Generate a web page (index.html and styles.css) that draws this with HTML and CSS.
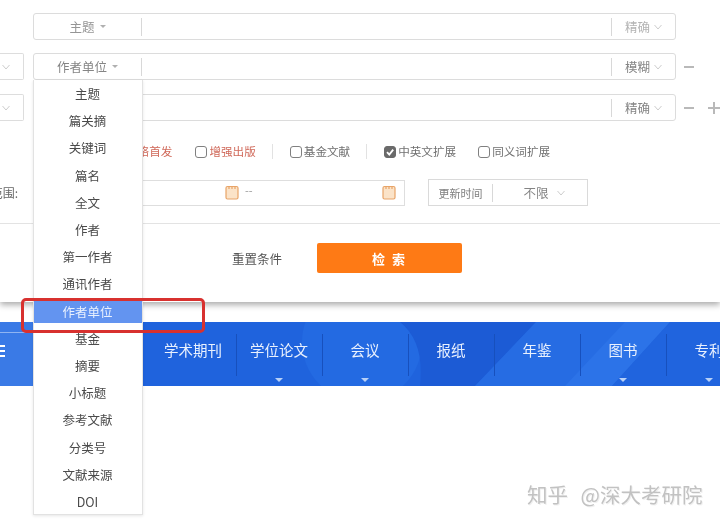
FILE: index.html
```html
<!DOCTYPE html>
<html lang="zh">
<head>
<meta charset="utf-8">
<title>高级检索</title>
<link rel="stylesheet" href="styles.css">
</head>
<body>
<div class="page">
  <section class="panel">
    <div class="rows">
      <div class="row">
        <div class="stub stub-none"></div>
        <div class="field">
          <div class="select select-light">主题<i class="caret"></i></div>
          <div class="input"></div>
          <div class="match match-faint">精确<svg class="chev" viewBox="0 0 8 6"><path d="M.5 1 4 5l3.500-4"/></svg></div>
        </div>
      </div>
      <div class="row">
        <div class="stub"><svg class="chev" viewBox="0 0 8 6"><path d="M.5 1 4 5l3.500-4"/></svg></div>
        <div class="field">
          <div class="select">作者单位<i class="caret"></i></div>
          <div class="input"></div>
          <div class="match">模糊<svg class="chev" viewBox="0 0 8 6"><path d="M.5 1 4 5l3.500-4"/></svg></div>
        </div>
        <div class="ops"><span class="minus"></span></div>
      </div>
      <div class="row">
        <div class="stub"><svg class="chev" viewBox="0 0 8 6"><path d="M.5 1 4 5l3.500-4"/></svg></div>
        <div class="field">
          <div class="select"></div>
          <div class="input"></div>
          <div class="match">精确<svg class="chev" viewBox="0 0 8 6"><path d="M.5 1 4 5l3.500-4"/></svg></div>
        </div>
        <div class="ops"><span class="minus"></span><span class="plus"></span></div>
      </div>
    </div>

    <div class="checks">
      <span class="check red">网络首发</span>
      <label class="check red c-enhance"><i class="box"></i>增强出版</label>
      <i class="vline"></i>
      <label class="check"><i class="box"></i>基金文献</label>
      <i class="vline"></i>
      <label class="check"><i class="box on"><svg viewBox="0 0 10 10"><path d="M2 5.200 4.300 7.600 8.200 2.600"/></svg></i>中英文扩展</label>
      <label class="check c-syn"><i class="box"></i>同义词扩展</label>
    </div>

    <div class="dates">
      <div class="date-label"><span>时间范围:</span></div>
      <div class="date-box">
        <div class="date-part">
          <svg class="cal" viewBox="0 0 14 15"><rect x="1" y="1.500" width="12" height="12.500" rx="1.500"/><path d="M4 1v3M7 1v3M10 1v3"/></svg>
        </div>
        <span class="dash">--</span>
        <div class="date-part date-end">
          <svg class="cal" viewBox="0 0 14 15"><rect x="1" y="1.500" width="12" height="12.500" rx="1.500"/><path d="M4 1v3M7 1v3M10 1v3"/></svg>
        </div>
      </div>
      <div class="update">
        <span class="update-label">更新时间</span>
        <span class="update-value">不限<svg class="chev" viewBox="0 0 8 6"><path d="M.5 1 4 5l3.500-4"/></svg></span>
      </div>
    </div>

    <div class="actions">
      <a class="reset">重置条件</a>
      <button class="search" type="button">检 索</button>
    </div>
  </section>

  <nav class="nav">
    <svg class="nav-bg" viewBox="0 0 720 64" preserveAspectRatio="none">
      <rect width="720" height="64" fill="#1f63dd"/>
      <rect width="140" height="64" fill="#3a7ae6"/>
      <circle cx="362" cy="20" r="60" fill="#236ae2"/>
      <path d="M400 0H536L475 64H420Q425 20 400 0Z" fill="#1c5bd5"/>
      <path d="M475 64 536 0H670L612 64Z" fill="#266ce3"/>
      <path d="M565 64 625 0H670L612 64Z" fill="#2c73e8"/>
      <path d="M612 64 670 0H720V64Z" fill="#2064de"/>
    </svg>
    <div class="nav-left"><span class="nav-icon"></span></div>
    <div class="nav-item">学术期刊</div>
    <div class="nav-item more">学位论文</div>
    <div class="nav-item more">会议</div>
    <div class="nav-item">报纸</div>
    <div class="nav-item">年鉴</div>
    <div class="nav-item more">图书</div>
    <div class="nav-item more">专利</div>
  </nav>

  <ul class="menu">
    <li>主题</li>
    <li>篇关摘</li>
    <li>关键词</li>
    <li>篇名</li>
    <li>全文</li>
    <li>作者</li>
    <li>第一作者</li>
    <li>通讯作者</li>
    <li class="active"><span>作者单位</span></li>
    <li>基金</li>
    <li>摘要</li>
    <li>小标题</li>
    <li>参考文献</li>
    <li>分类号</li>
    <li>文献来源</li>
    <li>DOI</li>
  </ul>

  <div class="callout"></div>
  <div class="watermark">知乎 @深大考研院</div>
</div>
</body>
</html>
```
FILE: styles.css
```css
* { box-sizing: border-box; }
html, body { margin: 0; padding: 0; background: #fff; }
body {
  font-family: "Noto Sans CJK SC", "Liberation Sans", sans-serif;
  font-size: 12.5px;
  color: #555;
  overflow: hidden;
}
.page {
  position: relative;
  width: 720px;
  height: 524px;
  overflow: hidden;
  filter: blur(.4px);
}

.panel {
  height: 302px;
  background: #fff;
  box-shadow: 0 3px 6px rgba(0, 0, 0, .32);
  padding-top: 13px;
}
.rows { display: flex; flex-direction: column; gap: 13px; }
.row { display: flex; height: 27px; }
.row:last-child { margin-top: 1px; }
.stub {
  width: 24px;
  margin-right: 9px;
  border: 1px solid #ddd;
  border-left: 0;
  border-radius: 0 2px 2px 0;
  display: flex;
  align-items: center;
  justify-content: flex-start;
  padding-left: 2px;
}
.stub-none { border: 0; }
.chev { width: 8px; height: 6px; fill: none; stroke: #cdcdcd; stroke-width: 1; }
.field {
  width: 643px;
  display: flex;
  align-items: center;
  border: 1px solid #dcdcdc;
  border-radius: 3px;
}
.select {
  width: 108px;
  height: 18px;
  border-right: 1px solid #d8d8d8;
  display: flex;
  align-items: center;
  justify-content: center;
  gap: 4px;
  color: #858585;
}
.select-light { color: #959595; }
.caret {
  width: 0;
  height: 0;
  margin-left: 1px;
  border: 3px solid transparent;
  border-top: 3px solid #b0b0b0;
  border-bottom: 0;
}
.input { flex: 1; }
.match {
  width: 64px;
  height: 18px;
  border-left: 1px solid #d8d8d8;
  display: flex;
  align-items: center;
  padding-left: 13px;
  gap: 4px;
  color: #858585;
}
.match-faint { color: #b4b4b4; }
.ops { display: flex; align-items: center; margin-left: 8px; gap: 14px; }
.minus { display: block; width: 10px; height: 2px; background: #b9b9b9; }
.plus {
  display: block;
  width: 12px;
  height: 12px;
  background:
    linear-gradient(#b9b9b9, #b9b9b9) center / 100% 2px no-repeat,
    linear-gradient(#b9b9b9, #b9b9b9) center / 2px 100% no-repeat;
}

.checks {
  display: flex;
  align-items: center;
  height: 18px;
  font-size: 11.600px;
  margin-top: 21px;
  padding-left: 126px;
  color: #707070;
}
.check { display: flex; align-items: center; white-space: nowrap; }
.red { color: #d0695a; }
.c-enhance { margin-left: 23px; }
.c-syn { margin-left: 22px; }
.box {
  width: 12px;
  height: 12px;
  margin: 1px 2px 0 0;
  border: 1px solid #808080;
  border-radius: 3px;
  background: #fff;
  display: block;
}
.box.on { background: #6a6a6a; border-color: #6a6a6a; }
.box svg { display: block; width: 10px; height: 10px; fill: none; stroke: #fff; stroke-width: 1.800; }
.vline { display: block; width: 1px; height: 15px; margin: 0 17px 0 16px; background: #e2e2e2; }

.dates { display: flex; align-items: center; height: 27px; margin-top: 19px; }
.date-label { width: 18px; display: flex; justify-content: flex-end; margin-right: 15px; color: #666; white-space: nowrap; font-size: 12px; }
.date-box {
  width: 372px;
  height: 26px;
  border: 1px solid #dedede;
  display: flex;
  align-items: center;
}
.date-part { width: 205px; display: flex; justify-content: flex-end; }
.date-end { width: 143px; }
.cal { width: 14px; height: 15px; display: block; fill: #fbe3c8; stroke: #e8a468; stroke-width: 1.200; }
.dash { margin-left: 6px; color: #999; font-size: 11px; line-height: 1; margin-top: -5px; }
.update {
  width: 160px;
  height: 27px;
  margin-left: 23px;
  border: 1px solid #dadada;
  display: flex;
  align-items: center;
}
.update-label {
  width: 64px;
  height: 18px;
  line-height: 18px;
  text-align: center;
  font-size: 11px;
  border-right: 1px solid #d8d8d8;
  color: #808080;
}
.update-value { flex: 1; display: flex; align-items: center; justify-content: center; gap: 8px; color: #858585; padding-left: 8px; }

.actions {
  display: flex;
  align-items: center;
  justify-content: flex-start;
  height: 30px;
  margin-top: 37px;
  padding-left: 232px;
  position: relative;
}
.actions::before {
  content: "";
  position: absolute;
  left: 0;
  right: 0;
  top: -20px;
  height: 1px;
  background: #e3e3e3;
}
.reset { width: 85px; color: #555; }
.search {
  width: 145px;
  height: 30px;
  border: 0;
  border-radius: 2px;
  background: #fe7a15;
  color: #fff;
  font: 700 13px "Noto Sans CJK SC", sans-serif;
  letter-spacing: 2px;
}

.nav {
  position: relative;
  display: flex;
  height: 64px;
  margin-top: 20px;
}
.nav-bg { position: absolute; inset: 0; width: 100%; height: 100%; }
.nav-left { position: relative; flex: 0 0 150px; }
.nav-left::before {
  content: "";
  position: absolute;
  left: 0;
  top: 10px;
  width: 34px;
  height: 1px;
  background: #8fb4f2;
}
.nav-icon {
  position: absolute;
  left: 0;
  top: 23px;
  width: 5px;
  height: 12px;
  border-top: 2px solid #fff;
  border-bottom: 2px solid #fff;
  background: linear-gradient(#fff, #fff) center / 100% 2px no-repeat;
}
.nav-item {
  position: relative;
  flex: 0 0 86px;
  height: 64px;
  padding-top: 18px;
  text-align: center;
  color: #e9f1fe;
  font-size: 14.500px;
  line-height: 20px;
}
.nav-item::before {
  content: "";
  position: absolute;
  right: -1px;
  top: 12px;
  height: 42px;
  width: 1px;
  background: #1750bd;
}
.more::after {
  content: "";
  position: absolute;
  left: 39px;
  bottom: 4px;
  border: 4px solid transparent;
  border-top: 4px solid #b7d0f7;
  border-bottom: 0;
}

.menu {
  position: absolute;
  left: 33px;
  top: 80px;
  width: 110px;
  height: 435px;
  margin: 0;
  padding: 0 1px 0 0;
  list-style: none;
  background: #fff;
  border: 1px solid #e2e2e2;
  border-top: 0;
  box-shadow: 0 1px 3px rgba(0, 0, 0, .1);
  color: #4a4a4a;
}
.menu li {
  height: 27.200px;
  display: flex;
  align-items: center;
  justify-content: center;
}
.menu .active {
  background: linear-gradient(#fff 2px, #6394f0 2px, #6394f0 25px, #fff 25px);
  color: #e9f1fe;
  margin-right: -1px;
  padding-right: 1px;
}
.callout {
  position: absolute;
  left: 21px;
  top: 298px;
  width: 184px;
  height: 35px;
  border: 3px solid #d8312f;
  border-radius: 5px;
}
.watermark {
  position: absolute;
  left: 527px;
  top: 479px;
  font-size: 20.500px;
  line-height: 30px;
  word-spacing: 8px;
  color: #c2c2c2;
  text-shadow: 1px 1px 0 #f0f0f0;
  white-space: nowrap;
}
```
